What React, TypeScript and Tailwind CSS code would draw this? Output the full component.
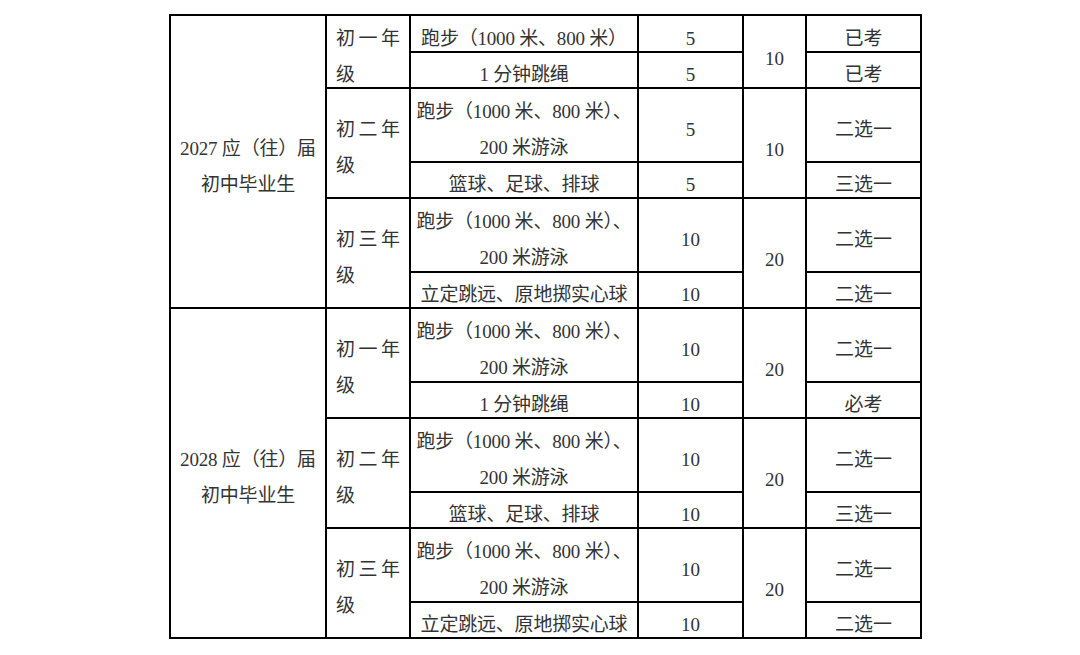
import React from "react";

type Item = { name: string[]; score: string; note: string };
type Grade = { grade: string; total: string; items: Item[] };
type Group = { name: string[]; grades: Grade[] };

const run = ["跑步（1000 米、800 米）、", "200 米游泳"];

const groups: Group[] = [
  {
    name: ["2027 应（往）届", "初中毕业生"],
    grades: [
      {
        grade: "一",
        total: "10",
        items: [
          { name: ["跑步（1000 米、800 米）"], score: "5", note: "已考" },
          { name: ["1 分钟跳绳"], score: "5", note: "已考" },
        ],
      },
      {
        grade: "二",
        total: "10",
        items: [
          { name: run, score: "5", note: "二选一" },
          { name: ["篮球、足球、排球"], score: "5", note: "三选一" },
        ],
      },
      {
        grade: "三",
        total: "20",
        items: [
          { name: run, score: "10", note: "二选一" },
          { name: ["立定跳远、原地掷实心球"], score: "10", note: "二选一" },
        ],
      },
    ],
  },
  {
    name: ["2028 应（往）届", "初中毕业生"],
    grades: [
      {
        grade: "一",
        total: "20",
        items: [
          { name: run, score: "10", note: "二选一" },
          { name: ["1 分钟跳绳"], score: "10", note: "必考" },
        ],
      },
      {
        grade: "二",
        total: "20",
        items: [
          { name: run, score: "10", note: "二选一" },
          { name: ["篮球、足球、排球"], score: "10", note: "三选一" },
        ],
      },
      {
        grade: "三",
        total: "20",
        items: [
          { name: run, score: "10", note: "二选一" },
          { name: ["立定跳远、原地掷实心球"], score: "10", note: "二选一" },
        ],
      },
    ],
  },
];

const cell = "bg-white flex items-center justify-center text-center pt-[10px] leading-[36px]";

function Lines({ lines }: { lines: string[] }) {
  return (
    <div className="flex flex-col items-center">
      {lines.map((l, i) => (
        <span key={i} className="whitespace-nowrap tracking-[-0.2px]">
          {l}
        </span>
      ))}
    </div>
  );
}

export default function App() {
  return (
    <div className="min-h-screen bg-white pt-[14px] pl-[169px]">
      <div
        className="grid w-fit gap-[2px] bg-black p-[2px] text-[19px] text-[#333] grid-cols-[154px_82px_226px_103px_61px_113px] grid-rows-[35px_34px_72px_34px_72px_34px_72px_34px_72px_34px_72px_34px]"
        style={{ fontFamily: '"Liberation Serif", "Noto Sans CJK SC", serif' }}
      >
        {groups.map((g) =>
          g.grades.map((gr, gi) =>
            gr.items.map((it, ii) => (
              <React.Fragment key={g.name[0] + gi + ii}>
                {gi === 0 && ii === 0 && (
                  <div className={`${cell} row-span-6`}>
                    <Lines lines={g.name} />
                  </div>
                )}
                {ii === 0 && (
                  <div className="row-span-2 bg-white flex items-center pt-[10px] px-[9px] leading-[36px]">
                    <div className="flex w-full flex-col">
                      <div className="flex justify-between">
                        <span>初</span>
                        <span>{gr.grade}</span>
                        <span>年</span>
                      </div>
                      <span>级</span>
                    </div>
                  </div>
                )}
                <div className={cell}>
                  <Lines lines={it.name} />
                </div>
                <div className={cell}>{it.score}</div>
                {ii === 0 && <div className={`${cell} row-span-2 pt-[14px]`}>{gr.total}</div>}
                <div className={cell}>{it.note}</div>
              </React.Fragment>
            ))
          )
        )}
      </div>
    </div>
  );
}
